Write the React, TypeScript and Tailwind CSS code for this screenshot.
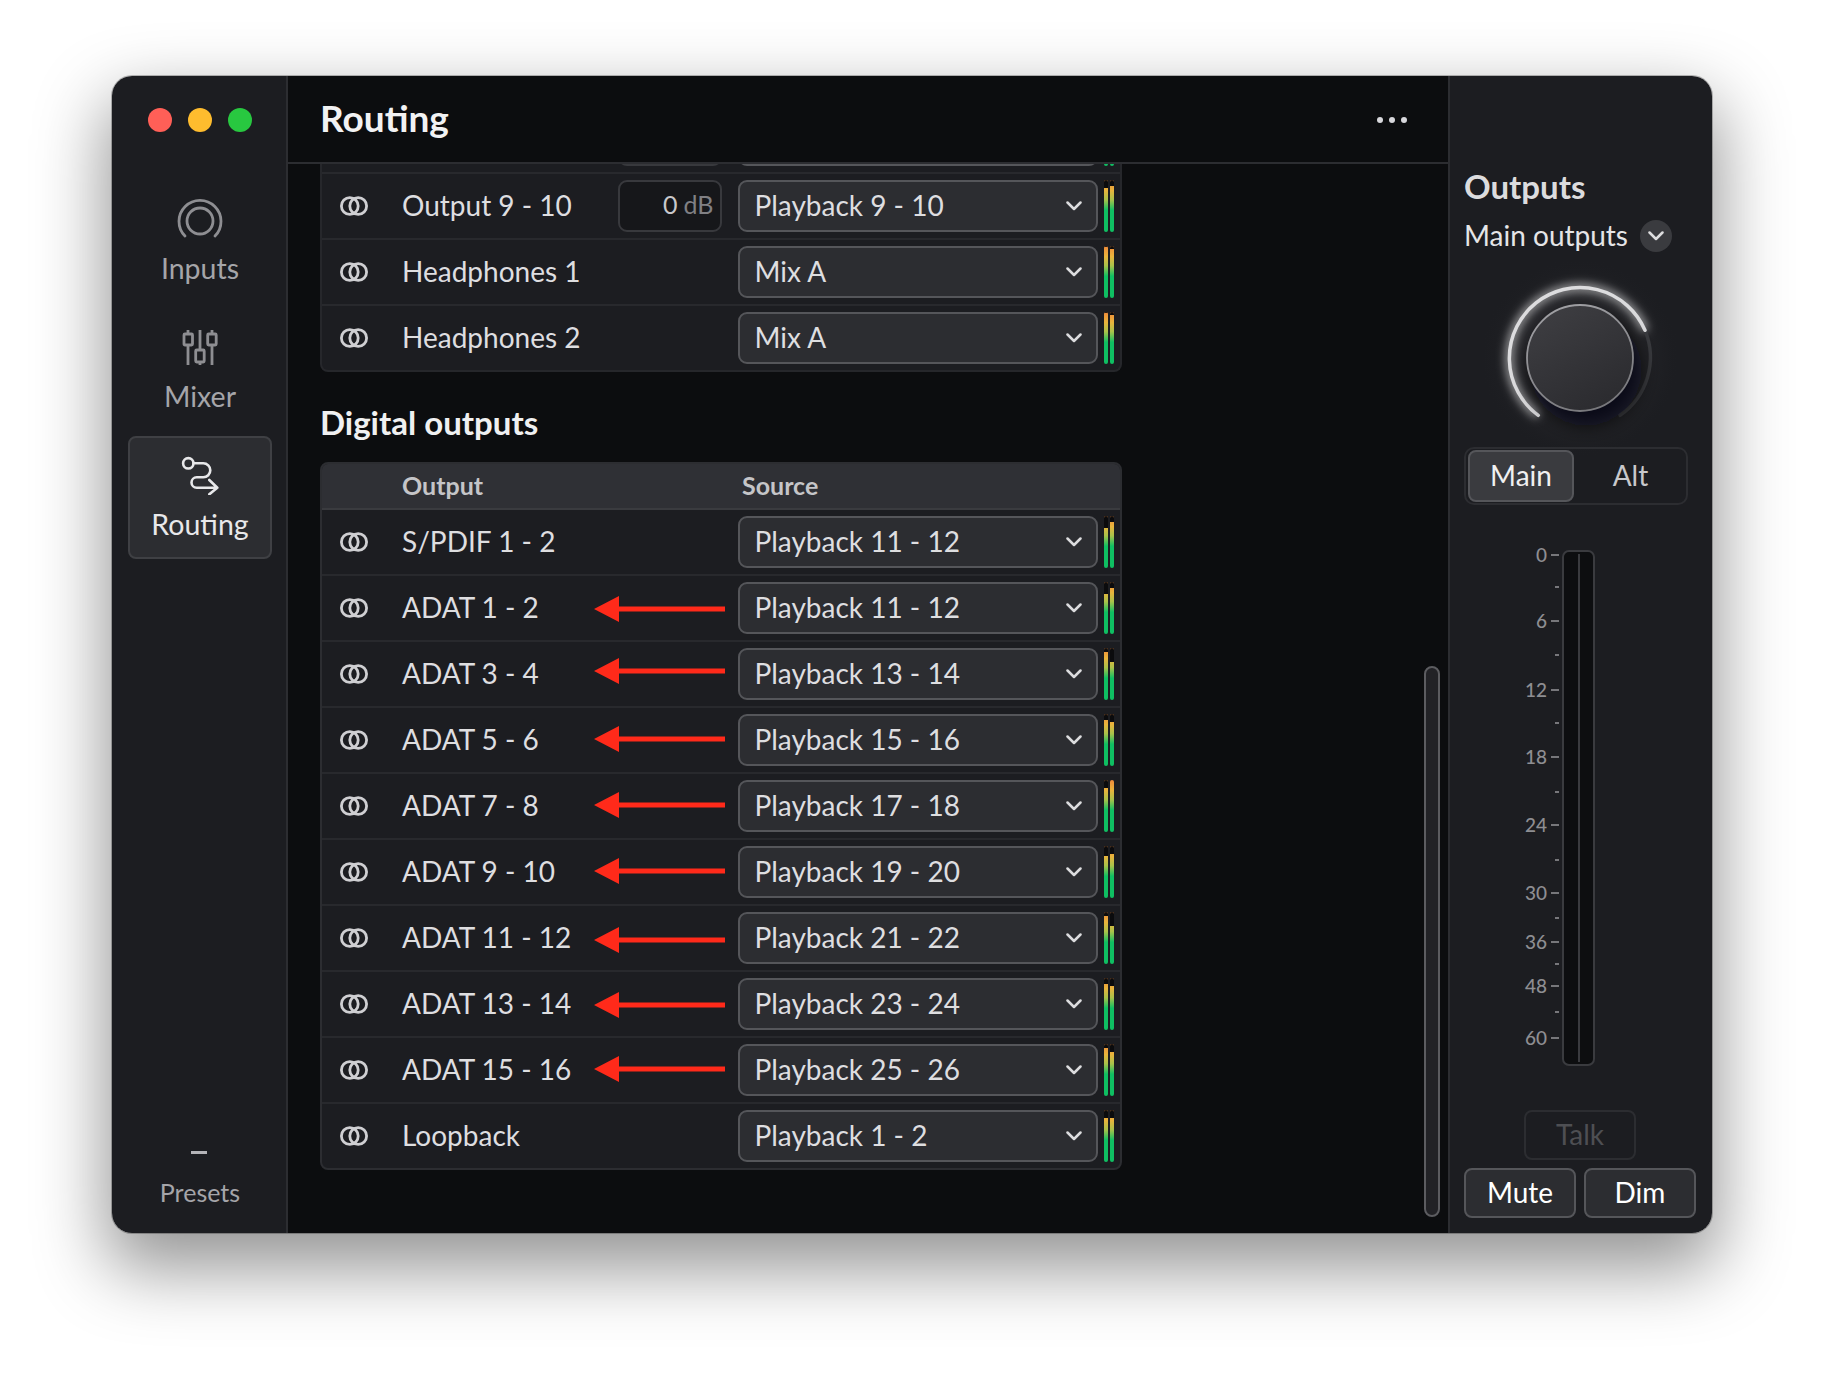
const meterGradient =
    "bg-[linear-gradient(to_top,#0fbf62_0%,#0fbf62_42%,#a9c24a_62%,#e9b43c_80%,#f08a3a_100%)]"

type RowData = {
    name: string
    source: string
    meter: [number, number]
    trim?: boolean
    arrowTop?: string
}

const analogRows: RowData[] = [
    { name: "Output 9 - 10", source: "Playback 9 - 10", meter: [8, 6], trim: true },
    { name: "Headphones 1", source: "Mix A", meter: [1, 3] },
    { name: "Headphones 2", source: "Mix A", meter: [1, 3] },
]

const digitalRows: RowData[] = [
    { name: "S/PDIF 1 - 2", source: "Playback 11 - 12", meter: [12, 6] },
    { name: "ADAT 1 - 2", source: "Playback 11 - 12", meter: [12, 6], arrowTop: "top-[20px]" },
    { name: "ADAT 3 - 4", source: "Playback 13 - 14", meter: [4, 14], arrowTop: "top-[16px]" },
    { name: "ADAT 5 - 6", source: "Playback 15 - 16", meter: [6, 8], arrowTop: "top-[18px]" },
    { name: "ADAT 7 - 8", source: "Playback 17 - 18", meter: [8, 0], arrowTop: "top-[18px]" },
    { name: "ADAT 9 - 10", source: "Playback 19 - 20", meter: [10, 8], arrowTop: "top-[18px]" },
    { name: "ADAT 11 - 12", source: "Playback 21 - 22", meter: [4, 14], arrowTop: "top-[21px]" },
    { name: "ADAT 13 - 14", source: "Playback 23 - 24", meter: [6, 8], arrowTop: "top-[20px]" },
    { name: "ADAT 15 - 16", source: "Playback 25 - 26", meter: [4, 8], arrowTop: "top-[18px]" },
    { name: "Loopback", source: "Playback 1 - 2", meter: [8, 8] },
]

const scaleTicks = [
    { label: "0", h: 32 },
    { label: "", h: 34 },
    { label: "6", h: 34 },
    { label: "", h: 34.5 },
    { label: "12", h: 33.5 },
    { label: "", h: 34 },
    { label: "18", h: 34.5 },
    { label: "", h: 33.5 },
    { label: "24", h: 34.5 },
    { label: "", h: 33.5 },
    { label: "30", h: 24.5 },
    { label: "", h: 24 },
    { label: "36", h: 22 },
    { label: "", h: 22 },
    { label: "48", h: 26 },
    { label: "", h: 26 },
    { label: "60", h: 20 },
]

function InputsIcon() {
    return (
        <svg width="48" height="48" viewBox="0 0 48 48" fill="none" stroke="#8e8e92" strokeWidth="2.8" strokeLinecap="round" className="mt-[3px]">
            <path d="M9 39A21 21 0 1 1 39 39" />
            <circle cx="24" cy="24" r="13" />
        </svg>
    )
}

function MixerIcon() {
    return (
        <svg width="36" height="36" viewBox="0 0 36 36" fill="none" stroke="#8e8e92" strokeWidth="2.8" className="mt-[2px]">
            <path d="M6 0V4M6 15V35M18 0V20M18 32V35M30 0V4M30 15V35" />
            <rect x="2" y="4" width="8.5" height="11" rx="1" />
            <rect x="13.7" y="20" width="8.5" height="12" rx="1" />
            <rect x="25.7" y="4" width="8.5" height="11" rx="1" />
        </svg>
    )
}

function RoutingIcon() {
    return (
        <svg width="40" height="40" viewBox="0 0 40 40" fill="none" stroke="#e8e8ea" strokeWidth="2.6" strokeLinecap="round" strokeLinejoin="round">
            <circle cx="8.3" cy="8.3" r="5.2" />
            <path d="M13.5 8.3H23.3A7 7 0 0 1 23.3 22.3H16.7A5.2 5.2 0 0 0 16.7 32.7H37.3M29.3 25L37.3 32.7L29.3 39.3" />
        </svg>
    )
}

function LinkIcon() {
    return (
        <svg width="28" height="20" viewBox="0 0 28 20" fill="none" stroke="#cfcfd2" strokeWidth="2.8" className="shrink-0">
            <circle cx="9.8" cy="10" r="8.4" />
            <circle cx="18.2" cy="10" r="8.4" />
        </svg>
    )
}

function Chevron({ className }: { className?: string }) {
    return (
        <svg width="16" height="10" viewBox="0 0 16 10" fill="none" stroke="#dcdcde" strokeWidth="2.5" strokeLinecap="round" strokeLinejoin="round" className={className}>
            <path d="M1.5 1.5L8 8L14.5 1.5" />
        </svg>
    )
}

function Arrow({ top }: { top: string }) {
    return (
        <svg width="131" height="26" viewBox="0 0 131 26" className={`absolute left-[272px] ${top}`}>
            <path d="M0 13L25 0V10.5H131V15.5H25V26Z" fill="#ff2a1a" />
        </svg>
    )
}

function MeterBar({ cover }: { cover: number }) {
    return (
        <div className={`h-[52px] w-[4.5px] overflow-hidden rounded-full ${meterGradient}`}>
            <div className="w-full bg-[#0b0b0d]" style={{ height: cover }} />
        </div>
    )
}

function Meter({ levels }: { levels: [number, number] }) {
    return (
        <div className="ml-[6px] flex shrink-0 gap-[1.5px]">
            <MeterBar cover={levels[0]} />
            <MeterBar cover={levels[1]} />
        </div>
    )
}

function SourceSelect({ value }: { value: string }) {
    return (
        <div className="ml-[16px] flex h-[52px] w-[360px] shrink-0 items-center justify-between rounded-[9px] border-2 border-[#55565a] bg-[#2c2d31] pl-[15px] pr-[14px] text-[#dedee0]">
            <span className="pb-[2px]">{value}</span>
            <Chevron />
        </div>
    )
}

function TrimInput() {
    return (
        <div className="flex h-[52px] w-[104px] shrink-0 items-center justify-end gap-[6px] rounded-[9px] border-2 border-[#38393d] bg-[#16171a] pb-[2px] pr-[6px] text-[25px]">
            <span className="text-[#c8c8cb]">0</span>
            <span className="text-[#808084]">dB</span>
        </div>
    )
}

function Row({ row }: { row: RowData }) {
    return (
        <div className="relative flex h-[66px] items-center border-b-2 border-[#28292d] pl-[18px] pr-[6px] last:h-[64px] last:border-b-0">
            <LinkIcon />
            <span className="ml-[34px] flex-1 pb-[2px] text-[#dedee0]">{row.name}</span>
            {row.trim && <TrimInput />}
            <SourceSelect value={row.source} />
            <Meter levels={row.meter} />
            {row.arrowTop && <Arrow top={row.arrowTop} />}
        </div>
    )
}

function NavItem({ icon, label, active }: { icon: React.ReactNode; label: string; active?: boolean }) {
    return (
        <div
            className={`flex h-[123px] w-[144px] flex-col items-center rounded-[8px] border-2 pt-[17px] ${
                active ? "border-[#3f4044] bg-[#2c2d31] text-[#e8e8ea]" : "border-transparent text-[#a5a5a9]"
            }`}
        >
            <div className="flex h-[40px] items-center justify-center">{icon}</div>
            <span className="mt-[13px] text-[28.5px] leading-[32px]">{label}</span>
        </div>
    )
}

function Sidebar() {
    return (
        <aside className="flex w-[176px] shrink-0 flex-col items-center border-r-2 border-[#2c2d31] bg-[#1c1d21] pl-[2px] pt-[32px]">
            <div className="flex gap-[16px]">
                <div className="h-[24px] w-[24px] rounded-full bg-[#ff5f57]" />
                <div className="h-[24px] w-[24px] rounded-full bg-[#febc2e]" />
                <div className="h-[24px] w-[24px] rounded-full bg-[#28c840]" />
            </div>
            <nav className="mt-[48px] flex flex-col gap-[5px]">
                <NavItem icon={<InputsIcon />} label="Inputs" />
                <NavItem icon={<MixerIcon />} label="Mixer" />
                <NavItem icon={<RoutingIcon />} label="Routing" active />
            </nav>
            <div className="mt-auto flex flex-col items-center pb-[25px]">
                <div className="mr-[2px] h-[3px] w-[16px] bg-[#b4b4b8]" />
                <span className="mt-[22px] text-[25px] leading-[32px] text-[#a5a5a9]">Presets</span>
            </div>
        </aside>
    )
}

function Routing() {
    return (
        <main className="relative flex min-w-0 flex-1 flex-col bg-[#0c0d0f]">
            <header className="flex h-[88px] shrink-0 items-center justify-between border-b-2 border-[#2c2d31] pl-[32px] pr-[41px]">
                <h1 className="pb-[2px] text-[37px] font-bold text-[#f2f2f3]">Routing</h1>
                <div className="mt-[2px] flex gap-[6px]">
                    <div className="h-[6px] w-[6px] rounded-full bg-[#d8d8dc]" />
                    <div className="h-[6px] w-[6px] rounded-full bg-[#d8d8dc]" />
                    <div className="h-[6px] w-[6px] rounded-full bg-[#d8d8dc]" />
                </div>
            </header>
            <div className="min-h-0 flex-1 overflow-hidden pl-[32px] text-[28px]">
                <div className="w-[802px] rounded-b-[8px] border-2 border-t-0 border-[#26272b] bg-[#1c1d21]">
                    <div className="flex h-[10px] items-end overflow-hidden border-b-2 border-[#28292d] pb-[6px] pl-[18px] pr-[6px]">
                        <div className="ml-auto h-[52px] w-[104px] shrink-0 rounded-[9px] border-2 border-[#38393d] bg-[#16171a]" />
                        <div className="ml-[16px] h-[52px] w-[360px] shrink-0 rounded-[9px] border-2 border-[#55565a] bg-[#2c2d31]" />
                        <Meter levels={[8, 8]} />
                    </div>
                    {analogRows.map(row => (
                        <Row key={row.name} row={row} />
                    ))}
                </div>
                <h2 className="mt-[30px] mb-[20px] text-[33px] font-bold leading-[40px] text-[#f0f0f1]">Digital outputs</h2>
                <div className="w-[802px] overflow-hidden rounded-[8px] border-2 border-[#2c2d31] bg-[#1c1d21]">
                    <div className="flex h-[46px] items-center border-b-2 border-[#3a3b3f] bg-[#2f3035] text-[25px] font-bold text-[#c5c5c8]">
                        <span className="ml-[80px] w-[340px]">Output</span>
                        <span>Source</span>
                    </div>
                    {digitalRows.map(row => (
                        <Row key={row.name} row={row} />
                    ))}
                </div>
            </div>
            <div className="absolute bottom-[16px] right-[8px] top-[590px] w-[16px] rounded-full border-2 border-[#5c5c60] bg-[#222226]" />
        </main>
    )
}

function Knob() {
    return (
        <svg width="200" height="200" viewBox="0 0 200 200" className="shrink-0">
            <defs>
                <linearGradient id="knob-face" x1="0.2" y1="0" x2="0.8" y2="1">
                    <stop offset="0" stopColor="#3e3e42" />
                    <stop offset="1" stopColor="#2a2a2e" />
                </linearGradient>
                <linearGradient id="knob-edge" x1="0.3" y1="0" x2="0.7" y2="1">
                    <stop offset="0" stopColor="#a0a0a4" />
                    <stop offset="1" stopColor="#77777b" />
                </linearGradient>
                <radialGradient id="knob-halo">
                    <stop offset="0.6" stopColor="#2a2a2e" stopOpacity="0.7" />
                    <stop offset="1" stopColor="#1c1d21" stopOpacity="0" />
                </radialGradient>
                <filter id="blur-soft" x="-30%" y="-30%" width="160%" height="160%">
                    <feGaussianBlur stdDeviation="5" />
                </filter>
                <filter id="blur-wide" x="-40%" y="-40%" width="180%" height="180%">
                    <feGaussianBlur stdDeviation="9" />
                </filter>
            </defs>
            <circle cx="100" cy="100" r="100" fill="url(#knob-halo)" />
            <path d="M58.3 157.3A70.7 70.7 0 1 1 165 72.3" fill="none" stroke="#ffffff" strokeOpacity="0.65" strokeWidth="7" filter="url(#blur-soft)" />
            <path d="M165 72.3A70.7 70.7 0 0 1 140 157.3" fill="none" stroke="#3a3b3f" strokeWidth="3.5" strokeLinecap="round" />
            <path d="M58.3 157.3A70.7 70.7 0 1 1 165 72.3" fill="none" stroke="#dcdcde" strokeWidth="3.5" strokeLinecap="round" />
            <circle cx="106" cy="112" r="56" fill="#08080a" fillOpacity="0.75" filter="url(#blur-wide)" />
            <circle cx="100" cy="100" r="53" fill="url(#knob-face)" stroke="url(#knob-edge)" strokeWidth="1.8" />
        </svg>
    )
}

function OutputScale() {
    return (
        <div className="flex w-[60px] flex-col items-end">
            {scaleTicks.map((tick, i) => (
                <div key={i} className="flex items-start justify-end gap-[4px]" style={{ height: tick.h }}>
                    {tick.label && <span className="-mt-[9px] text-[19px] font-medium leading-[20px] text-[#8e8e92]">{tick.label}</span>}
                    <div className={`h-[2px] bg-[#77777b] ${tick.label ? "w-[8px]" : "w-[4px]"}`} />
                </div>
            ))}
        </div>
    )
}

function Outputs() {
    return (
        <aside className="flex w-[264px] shrink-0 flex-col border-l-2 border-[#2c2d31] bg-[#1c1d21] pt-[90px] text-[28px]">
            <h2 className="pl-[14px] text-[33px] font-bold leading-[40px] text-[#dcdcde]">Outputs</h2>
            <div className="mt-[14px] flex h-[32px] items-center pl-[14px]">
                <span className="pb-[2px] text-[#e5e5e7]">Main outputs</span>
                <div className="ml-[12px] flex h-[32px] w-[32px] items-center justify-center rounded-full bg-[#3a3b3f]">
                    <Chevron />
                </div>
            </div>
            <div className="mt-[6px] flex justify-center pr-[2px]">
                <Knob />
            </div>
            <div className="-mt-[11px] ml-[14px] flex h-[58px] w-[224px] items-center rounded-[10px] border-2 border-[#2c2d31] pl-[2px]">
                <div className="flex h-[52px] w-[106px] items-center justify-center rounded-[8px] border-2 border-[#55565a] bg-[#3a3b3f] pb-[2px] text-[#f0f0f1]">Main</div>
                <div className="flex flex-1 justify-center pb-[2px] pl-[1px] text-[#c8c8cb]">Alt</div>
            </div>
            <div className="mt-[45px] flex h-[516px] items-start pl-[49px]">
                <div className="pt-[4px]">
                    <OutputScale />
                </div>
                <div className="ml-[3px] flex h-full w-[33px] justify-center rounded-[7px] border-2 border-[#3a3b3f] bg-[#0d0e10] py-[2px]">
                    <div className="w-[2px] bg-[#3a3b3f]" />
                </div>
            </div>
            <div className="mt-[44px] flex justify-center pr-[2px]">
                <div className="flex h-[50px] w-[112px] items-center justify-center rounded-[8px] border-2 border-[#2c2d31] pb-[2px] text-[#4e4f53]">Talk</div>
            </div>
            <div className="mt-[8px] flex gap-[8px] pl-[14px]">
                <div className="flex h-[50px] w-[112px] items-center justify-center rounded-[8px] border-2 border-[#55565a] bg-[#2c2d31] pb-[2px] text-white">Mute</div>
                <div className="flex h-[50px] w-[112px] items-center justify-center rounded-[8px] border-2 border-[#55565a] bg-[#2c2d31] pb-[2px] text-white">Dim</div>
            </div>
        </aside>
    )
}

export default function App() {
    return (
        <div className="h-[1382px] w-[1824px] overflow-hidden bg-white pl-[112px] pt-[76px] font-['Lato',sans-serif]">
            <div className="flex h-[1157px] w-[1600px] overflow-hidden rounded-[20px] shadow-[0_0_0_1px_rgba(0,0,0,0.25),0_30px_70px_6px_rgba(0,0,0,0.42)]">
                <Sidebar />
                <Routing />
                <Outputs />
            </div>
        </div>
    )
}
